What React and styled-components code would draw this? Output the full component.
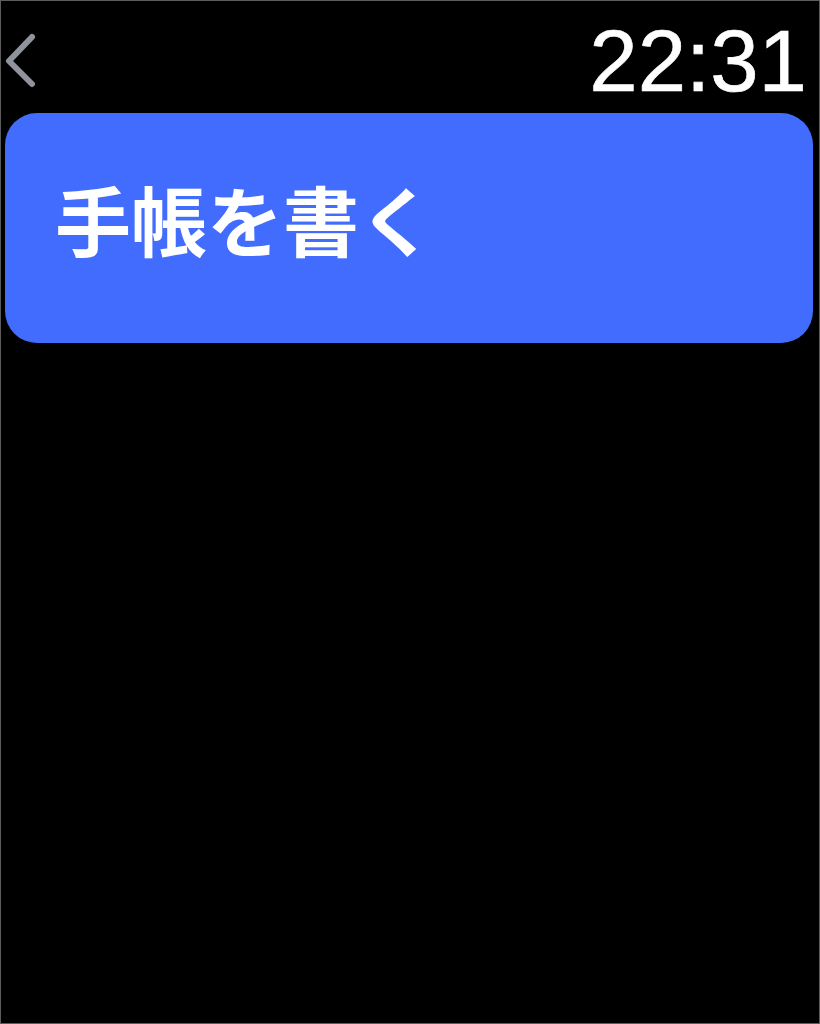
import React from "react";
import styled, { createGlobalStyle } from "styled-components";

const Global = createGlobalStyle`
  html, body { margin: 0; padding: 0; background: #000; }
  * { box-sizing: border-box; }
`;

const Screen = styled.div`
  width: 820px;
  height: 1024px;
  background: #000;
  border: 1px solid #5c5c5c;
  display: flex;
  flex-direction: column;
  overflow: hidden;
`;

const Header = styled.header`
  height: 112px;
  padding: 6px 12px 0 4px;
  display: flex;
  align-items: center;
  justify-content: space-between;
`;

const BackButton = styled.button`
  background: none;
  border: 0;
  padding: 0;
  width: 32px;
  height: 58px;
  display: flex;
  align-items: center;
  cursor: pointer;
`;

const Time = styled.div`
  font-family: "Liberation Sans", Arial, sans-serif;
  font-size: 87px;
  line-height: 1;
  color: #fff;
  letter-spacing: 0;
  -webkit-text-stroke: 0.6px #fff;
`;

const Card = styled.button`
  margin: 0 6px 0 4px;
  height: 230px;
  border: 0;
  border-radius: 32px;
  background: #416cfd;
  display: flex;
  align-items: center;
  padding: 0 0 20px 50px;
  text-align: left;
  cursor: pointer;
`;

const CardLabel = styled.span`
  font-family: "Noto Sans CJK JP", "Noto Sans", sans-serif;
  font-size: 76px;
  font-weight: 700;
  line-height: 1;
  color: #fff;
`;

export default function App() {
  return (
    <>
      <Global />
      <Screen>
        <Header>
          <BackButton aria-label="戻る">
            <svg width="32" height="58" viewBox="0 0 32 58">
              <polyline
                points="27,6 4,30 27,53"
                fill="none"
                stroke="#8f939b"
                strokeWidth="6"
                strokeLinecap="round"
                strokeLinejoin="round"
              />
            </svg>
          </BackButton>
          <Time>22:31</Time>
        </Header>
        <Card>
          <CardLabel>手帳を書く</CardLabel>
        </Card>
      </Screen>
    </>
  );
}
